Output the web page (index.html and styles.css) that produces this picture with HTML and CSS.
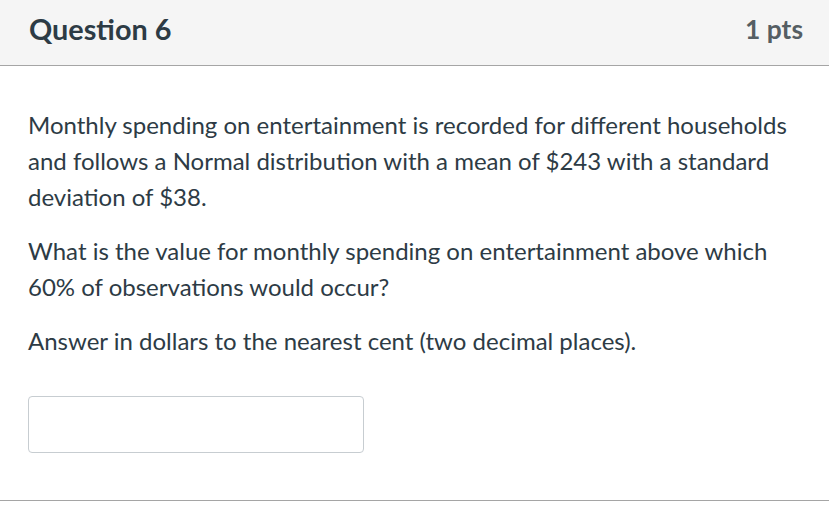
FILE: index.html
```html
<!DOCTYPE html>
<html>
<head>
<meta charset="utf-8">
<link rel="stylesheet" href="styles.css">
</head>
<body>
<div class="question">
  <div class="header">
    <h2 class="title">Question 6</h2>
    <div class="points">1 pts</div>
  </div>
  <div class="content">
    <p>Monthly spending on entertainment is recorded for different households and follows a Normal distribution with a mean of $243 with a standard deviation of $38.</p>
    <p>What is the value for monthly spending on entertainment above which 60% of observations would occur?</p>
    <p>Answer in dollars to the nearest cent (two decimal places).</p>
    <div class="answer"><input class="answer-input" type="text"></div>
  </div>
</div>
</body>
</html>
```
FILE: styles.css
```css
html, body {
  margin: 0;
  padding: 0;
  background: #fff;
}
body {
  font-family: Lato, "Open Sans", sans-serif;
  color: #2d3b45;
  width: 829px;
  height: 506px;
  overflow: hidden;
}
.question {
  border-bottom: 1px solid #a5a5a5;
  height: 501px;
  box-sizing: border-box;
}
.header {
  display: flex;
  justify-content: space-between;
  align-items: center;
  background: #f5f5f5;
  height: 66px;
  border-bottom: 1px solid #a5a5a5;
  padding: 0 26px 7px 29px;
  box-sizing: border-box;
}
.title {
  margin: 0;
  font-size: 28.8px;
  font-weight: 700;
  color: #2d3b45;
}
.points {
  font-size: 26.4px;
  font-weight: 700;
  color: #555e63;
}
.content {
  padding: 41px 29px 0 28px;
}
.content p {
  margin: 0 0 18px 0;
  font-size: 24px;
  line-height: 36px;
}
.answer {
  padding-top: 19px;
}
.answer-input {
  display: block;
  width: 336px;
  height: 57px;
  box-sizing: border-box;
  border: 1px solid #c7cdd1;
  border-radius: 4px;
  margin: 0;
  background: #fff;
  font: inherit;
}
```
